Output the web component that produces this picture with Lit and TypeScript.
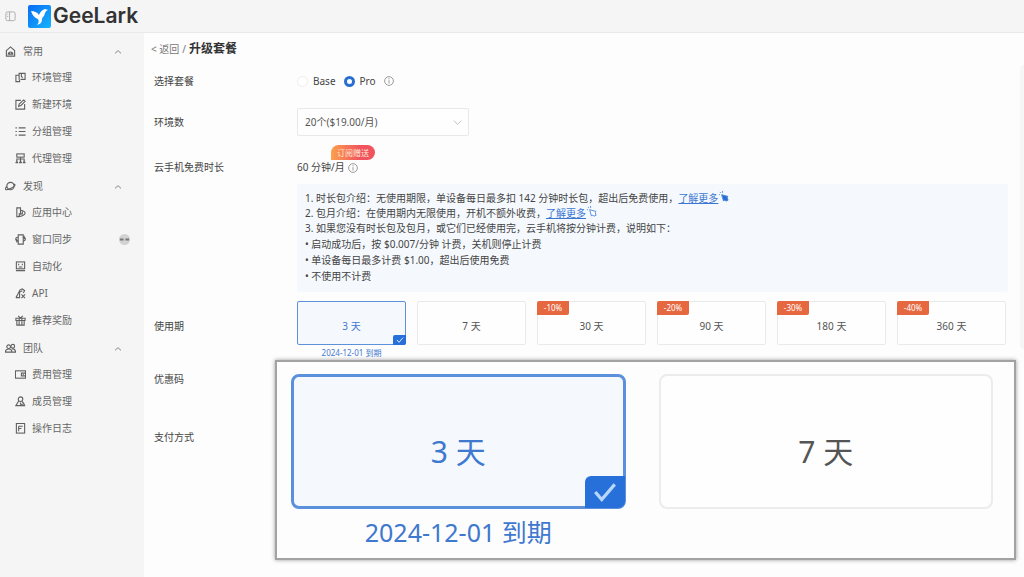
import { LitElement, html, css, svg } from "lit";
import { customElement, state } from "lit/decorators.js";

const icon = (body: unknown, cls = "ico", box = "0 0 24 24") =>
  html`<svg class=${cls} viewBox=${box} aria-hidden="true">${body}</svg>`;

const icons: Record<string, unknown> = {
  home: svg`<path d="M3 10 12 2l9 8v12H3z"/><path d="M7 18a5 5 0 0 1 10 0zM10 17v-2m4 2v-2"/>`,
  env: svg`<path d="M9 17V3h13v13H12"/><path d="M9 7H2v14h8v-4M14 3v7l3 2"/>`,
  edit: svg`<path d="M13 3H2v19h19V11"/><path d="M8 16l1-5L19 2l3 3-9 9z"/>`,
  list: svg`<path d="M8 4h15M8 12h15M8 20h15M1 4h3M1 12h3M1 20h3"/>`,
  proxy: svg`<rect x="4" y="2" width="16" height="7"/><path d="M12 9v12M4 18v-5h16v5"/><path d="M1 21h6M9 21h6M17 21h6M2 18h4M10 18h4M18 18h4"/>`,
  planet: svg`<circle cx="12" cy="11" r="8"/><path d="M4 12c-3 3-4 6-2 7 4 1 19-6 20-10 0-2-2-2-4-1"/>`,
  app: svg`<path d="M4 2h8v12l-4 7H4z"/><path d="M12 7c6 1 10 3 10 6s-6 8-14 8"/><path d="M8 15h8V9"/>`,
  sync: svg`<path d="M7 2h11v20H7z"/><path d="M7 7c-7 0-7 8-1 8M3 12l3 3-3 3M18 7c6 0 6 8 0 8M21 4l-3 3 3 3"/>`,
  bot: svg`<rect x="3" y="2" width="18" height="15"/><path d="M8 6v3m8-3v3M8 13h8M2 21h20"/>`,
  api: svg`<path d="M2 21l5-9 4-8 5-2 5 4-3 5M2 21h8V9l6-3"/><path d="M14 14l8 8m0-8-8 8"/>`,
  gift: svg`<path d="M2 7h20v5H2zM4 12h16v10H4zM9 7v15m6-15v15M7 2l5 5 5-5"/>`,
  team: svg`<circle cx="8" cy="8" r="4"/><circle cx="17" cy="7" r="4"/><path d="M1 20c0-9 14-9 14 0zM15 13c5-1 8 2 8 7h-8"/>`,
  wallet: svg`<rect x="1" y="4" width="22" height="16"/><path d="M23 9h-9v6h9M17 12h2"/>`,
  member: svg`<circle cx="12" cy="7" r="5"/><path d="M8 11l-6 10h19l-2-5-4-5M12 14v4h6"/>`,
  log: svg`<rect x="3" y="1" width="18" height="21"/><path d="M8 7h9M8 12h6M8 7v11"/>`,
  up: svg`<path d="M3 16l9-8 9 8"/>`,
  down: svg`<path d="M2 7l10 10L22 7"/>`,
  info: svg`<circle cx="12" cy="12" r="10.500"/><path d="M12 10v8M12 5v3"/>`,
  check: svg`<path d="M3 12l6 7L21 5"/>`,
};

const groups = [
  { name: "常用", icon: "home", items: [["环境管理", "env"], ["新建环境", "edit"], ["分组管理", "list"], ["代理管理", "proxy"]] },
  { name: "发现", icon: "planet", items: [["应用中心", "app"], ["窗口同步", "sync"], ["自动化", "bot"], ["API", "api"], ["推荐奖励", "gift"]] },
  { name: "团队", icon: "team", items: [["费用管理", "wallet"], ["成员管理", "member"], ["操作日志", "log"]] },
];

const periods = [
  { days: 3, off: 0 }, { days: 7, off: 0 }, { days: 30, off: 10 },
  { days: 90, off: 20 }, { days: 180, off: 30 }, { days: 360, off: 40 },
];

@customElement("app-root")
export class AppRoot extends LitElement {
  @state() private selected = 3;

  static styles = css`
    :host {
      display: flex;
      flex-direction: column;
      min-height: 100vh;
      position: relative;
      overflow: hidden;
      font: 10px/15px "Noto Sans", "Noto Sans CJK SC", sans-serif;
      color: #444;
      background: #fdfdfd;
    }
    * { box-sizing: border-box; }
    p, ul, h1 { margin: 0; padding: 0; }
    ul { list-style: none; }
    button { font: inherit; color: inherit; background: none; border: 0; padding: 0; cursor: pointer; }
    a { color: inherit; text-decoration: none; }
    svg { display: block; flex: none; }
    .ico { width: 11px; height: 11px; fill: none; stroke: #606060; stroke-width: 2.4; }
    header {
      display: flex; align-items: center; gap: 12px; height: 33px; padding: 0 5px;
      background: #f5f5f5; border-bottom: 1px solid #e9e9e9;
    }
    .toggle .ico { stroke: #aaa; stroke-width: 2; }
    .brand { display: flex; align-items: center; gap: 2px; }
    .mark { width: 23px; height: 23px; }
    .word { font: 600 21px/28px Inter, sans-serif; color: #333; }
    .body { display: flex; flex: 1; }
    nav { width: 144px; flex: none; background: #f5f5f5; padding-top: 6px; color: #666; }
    .group { display: flex; flex-direction: column; padding-bottom: 2px; }
    .head { display: flex; align-items: center; gap: 7px; height: 25px; padding: 0 22px 0 5px; text-align: left; }
    .head span { flex: 1; }
    .head .fold { width: 8px; height: 8px; fill: none; stroke: #888; stroke-width: 3; }
    .item { display: flex; align-items: center; gap: 6px; height: 27px; padding: 0 14px 0 15px; }
    .item span { flex: 1; }
    .badge { width: 11px; height: 11px; }
    main { flex: 1; min-width: 0; padding: 8px 16px 20px 10px; }
    .crumb { display: flex; align-items: center; gap: 3px; height: 16px; margin-left: -3px; color: #777; }
    h1 { font-size: 12px; line-height: 16px; font-weight: 700; color: #333; }
    .row { display: grid; grid-template-columns: 143px minmax(0, 1fr); align-items: center; }
    .plan { height: 48px; }
    .count { height: 34px; }
    .free { height: 45px; align-items: end; padding-bottom: 9px; }
    .choices { display: flex; align-items: center; gap: 8px; }
    .choices label { display: flex; align-items: center; gap: 5px; }
    .choices input {
      appearance: none; width: 11px; height: 11px; margin: 0; border-radius: 50%;
      border: 1px solid #eee; background: #fff;
    }
    .choices input:checked { border: 3px solid #2a6fd0; }
    .info { width: 10px; height: 10px; fill: none; stroke: #888; stroke-width: 2; }
    .picker { display: grid; width: 172px; align-items: center; }
    .picker > * { grid-area: 1 / 1; }
    .picker .ico { justify-self: end; margin-right: 7px; width: 9px; height: 9px; stroke: #bbb; pointer-events: none; }
    select {
      appearance: none; font: inherit; color: #555; width: 100%; height: 28px;
      padding: 0 7px; border: 1px solid #e8e8e8; border-radius: 2px; background: #fefefe;
    }
    .amount { display: flex; align-items: center; gap: 3px; position: relative; }
    .ribbon {
      position: absolute; left: 34px; top: -15px; padding: 0 6px; height: 15px; line-height: 15px; font-size: 8px;
      color: #ffe9d2; background: linear-gradient(90deg, #fba14c, #f2545f 65%); border-radius: 8px 8px 8px 0;
    }
    .notes { margin-left: 143px; background: #f5f9fe; padding: 7px 8px 8px; border-radius: 2px; }
    .notes p { display: flex; }
    .notes a { color: #3a76d2; text-decoration: underline; }
    .notes li { line-height: 16px; }
    .hand { width: 11px; height: 11px; fill: #fff; stroke: #4a86da; stroke-width: 1; }
    .hand.solid { fill: #2a6fd0; }
    .period { padding-top: 9px; align-items: start; }
    .period > span { padding-top: 18px; }
    .cards { display: grid; grid-template-columns: repeat(6, minmax(0, 1fr)); gap: 11px; padding-right: 2px; }
    .card {
      display: block; width: 100%; position: relative; height: 44px; padding-top: 7px;
      border: 1px solid #eaeaea; border-radius: 2px; color: #555; background: #fefefe;
    }
    .on { color: #3f78cf; background: #f5f9fe; border-color: #5d92da; }
    .off {
      position: absolute; left: -1px; top: -1px; width: 32px; height: 14px; line-height: 14px; font-size: 8px;
      color: #fff; background: #e66840; border-radius: 2px 0 2px 0;
    }
    .tick {
      position: absolute; right: -1px; bottom: -1px; display: grid; place-items: center;
      width: 13px; height: 10px; background: #2770da; border-radius: 2px 0 2px 0;
    }
    .tick svg { width: 8px; height: 8px; fill: none; stroke: #dceaff; stroke-width: 3; }
    .until { font-size: 8px; line-height: 16px; text-align: center; color: #3f78cf; }
    .coupon { height: 37px; }
    .pay { height: 78px; }
    .dock { position: absolute; right: 0; top: 65px; width: 4px; height: 284px; background: #f6f6f6; border-radius: 4px 0 0 4px; }
    .lens {
      position: absolute; right: 8px; top: 360px; width: 741px; height: 200px; padding: 12px 21px 0 14px;
      display: grid; grid-template-columns: 1fr 1fr; gap: 33px; background: #fdfdfd;
      border: 2px solid #a2a2a2; box-shadow: 0 0 4px #999;
    }
    .lens .card { height: 135px; padding-top: 20px; font-size: 30px; line-height: 36px; border: 2px solid #ececec; border-radius: 8px; }
    .lens .on { border: 3px solid #5b90dc; }
    .lens .tick { right: -2px; bottom: -2px; width: 40px; height: 32px; border-radius: 6px 0 7px 0; }
    .lens .tick svg { width: 26px; height: 26px; stroke: #b9d6fb; stroke-width: 3; }
    .lens .until { font-size: 25px; line-height: 46px; }
  `;

  private tile(days: number, off: number) {
    const on = this.selected === days;
    return html`<button class="card ${on ? "on" : ""}" type="button" aria-pressed=${on} @click=${() => (this.selected = days)}>
      ${off ? html`<span class="off">-${off}%</span>` : ""}${days} 天
      ${on ? html`<span class="tick">${icon(icons.check, "")}</span>` : ""}
    </button>`;
  }

  private period(days: number, off = 0) {
    return html`<div>
      ${this.tile(days, off)}
      ${this.selected === days ? html`<div class="until">2024-12-01 到期</div>` : ""}
    </div>`;
  }

  private hand(solid: boolean) {
    return html`<svg class="hand ${solid ? "solid" : ""}" viewBox="0 0 12 12" aria-hidden="true">
      <path d="M4 4l7 2-1 1 1 3-2 1-2-1-1 1z"/><path d="M1 4h1M2 1l1 1M5 0v2" />
    </svg>`;
  }

  render() {
    return html`
      <header>
        <button class="toggle" type="button" aria-label="菜单">${icon(svg`<rect x="2" y="2" width="20" height="19" rx="3"/><path d="M10 2v19M5 7h2M5 12h2"/>`)}</button>
        <a class="brand" href="#">
          <svg class="mark" viewBox="0 0 23 23" aria-hidden="true">
            <defs><linearGradient id="g" x2="1" y2="1"><stop stop-color="#0a6cf5"/><stop offset="1" stop-color="#16b4fb"/></linearGradient></defs>
            <rect width="23" height="23" rx="2" fill="url(#g)"/>
            <path fill="#fff" d="M3 6c3 0 6 1 8 4 1-3 3-5 6-6l3 1c-3 1-3 4-4 6-1 1-2 2-2 3 0 3-1 5-5 6 2-2 2-4 1-6-3-1-6-4-7-8z"/>
          </svg>
          <span class="word">GeeLark</span>
        </a>
      </header>
      <div class="body">
        <nav>
          ${groups.map((g) => html`<div class="group">
            <button class="head" type="button">${icon(icons[g.icon])}<span>${g.name}</span>${icon(icons.up, "fold")}</button>
            ${g.items.map(([name, ic]) => html`<a class="item" href="#">${icon(icons[ic])}<span>${name}</span>
              ${ic === "sync" ? html`<svg class="badge" viewBox="0 0 12 12" aria-hidden="true"><circle cx="6" cy="6" r="6" fill="#d2d2d2"/><path d="M1 6h4M7 6h4" stroke="#777" stroke-width="2"/></svg>` : ""}</a>`)}
          </div>`)}
        </nav>
        <main>
          <div class="crumb"><a href="#">&lt; 返回</a><span>/</span><h1>升级套餐</h1></div>
          <div class="row plan">
            <span>选择套餐</span>
            <div class="choices">
              <label><input type="radio" name="plan" />Base</label>
              <label><input type="radio" name="plan" checked />Pro</label>
              ${icon(icons.info, "info")}
            </div>
          </div>
          <div class="row count">
            <label for="count">环境数</label>
            <div class="picker"><select id="count"><option>20个($19.00/月)</option></select>${icon(icons.down)}</div>
          </div>
          <div class="row free">
            <span>云手机免费时长</span>
            <div class="amount">60 分钟/月 ${icon(icons.info, "info")}<span class="ribbon">订阅赠送</span></div>
          </div>
          <div class="notes">
            <p>1. 时长包介绍：无使用期限，单设备每日最多扣 142 分钟时长包，超出后免费使用，<a href="#">了解更多</a>${this.hand(true)}</p>
            <p>2. 包月介绍：在使用期内无限使用，开机不额外收费，<a href="#">了解更多</a>${this.hand(false)}</p>
            <p>3. 如果您没有时长包及包月，或它们已经使用完，云手机将按分钟计费，说明如下：</p>
            <ul>
              <li>• 启动成功后，按 $0.007/分钟 计费，关机则停止计费</li>
              <li>• 单设备每日最多计费 $1.00，超出后使用免费</li>
              <li>• 不使用不计费</li>
            </ul>
          </div>
          <div class="row period">
            <span>使用期</span>
            <div class="cards">${periods.map((p) => this.period(p.days, p.off))}</div>
          </div>
          <div class="row coupon"><span>优惠码</span></div>
          <div class="row pay"><span>支付方式</span></div>
        </main>
      </div>
      <div class="dock"></div>
      <section class="lens" aria-label="使用期">${this.period(3)}${this.period(7)}</section>
    `;
  }
}
